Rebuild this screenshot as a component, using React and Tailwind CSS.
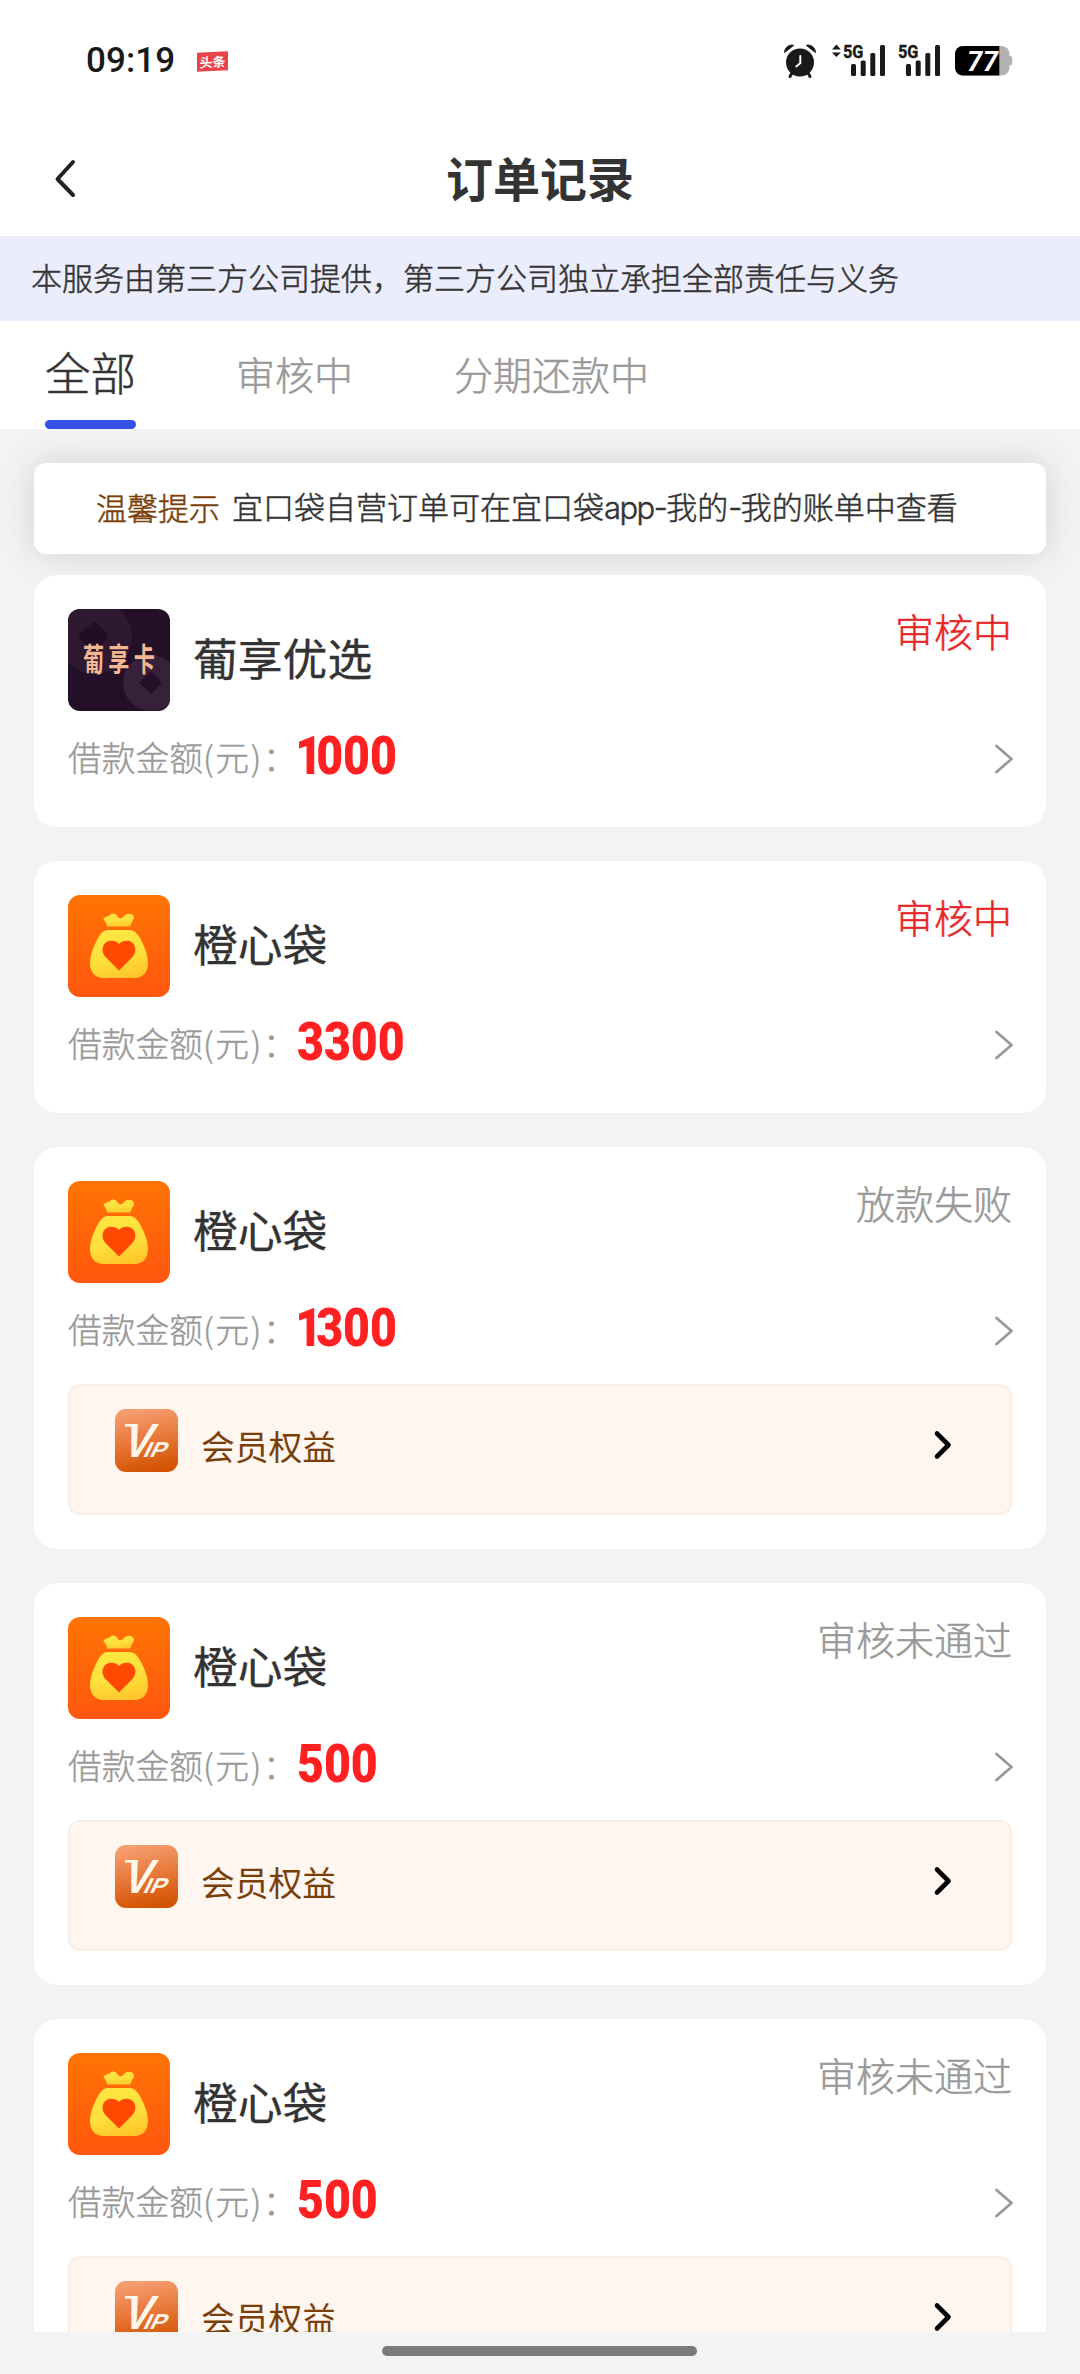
import React from "react";

const orders = [
  { logo: "card", name: "葡享优选", amount: "1000", status: "审核中", active: true, member: false },
  { logo: "bag", name: "橙心袋", amount: "3300", status: "审核中", active: true, member: false },
  { logo: "bag", name: "橙心袋", amount: "1300", status: "放款失败", active: false, member: true },
  { logo: "bag", name: "橙心袋", amount: "500", status: "审核未通过", active: false, member: true },
  { logo: "bag", name: "橙心袋", amount: "500", status: "审核未通过", active: false, member: true },
];

function AlarmIcon() {
  return (
    <svg className="h-[34px] w-8" viewBox="0 0 32 34" fill="none">
      <circle cx="16" cy="18.500" r="14" fill="#191919" />
      <path d="M0.600 8.500C0.600 4 5 0 9.600 1.400Z" fill="#191919" stroke="#191919" strokeLinejoin="round" />
      <path d="M31.400 8.500C31.400 4 27 0 22.400 1.400Z" fill="#191919" stroke="#191919" strokeLinejoin="round" />
      <path d="M8 29l-2 3.500M24 29l2 3.500" stroke="#191919" strokeWidth="3" strokeLinecap="round" />
      <path d="M16.300 12v7l-4 3.400" stroke="#fff" strokeWidth="2" strokeLinecap="round" />
    </svg>
  );
}

function Signal({ data }) {
  return (
    <svg className="h-[34px] w-[54px] overflow-visible" viewBox="0 0 54 34" fill="#191919">
      {data && (
        <>
          <path d="M0 5.600L4.400 0.500L8.800 5.600Z" />
          <path d="M0 8.400L4.400 13L8.800 8.400Z" />
        </>
      )}
      <text x="11" y="14" stroke="#191919" strokeWidth="0.400" fontFamily="Roboto, sans-serif" fontWeight="700" fontSize="18.500" textLength="20.500" lengthAdjust="spacingAndGlyphs">5G</text>
      <rect x="19" y="20" width="5" height="12" rx="1.500" />
      <rect x="28.700" y="16.500" width="5" height="15.500" rx="1.500" />
      <rect x="38.300" y="9" width="5" height="23" rx="1.500" />
      <rect x="48" y="1" width="5" height="31" rx="1.500" />
    </svg>
  );
}

function Battery() {
  return (
    <svg className="h-[34px] w-[58px]" viewBox="0 0 58 34">
      <defs>
        <clipPath id="battery-body">
          <rect x="0" y="2" width="54.500" height="29.500" rx="8" />
        </clipPath>
      </defs>
      <rect x="53" y="12" width="4.200" height="9.500" rx="2" fill="#b2b2b2" />
      <g clipPath="url(#battery-body)">
        <rect width="58" height="34" fill="#b2b2b2" />
        <rect width="44.300" height="34" fill="#000" />
      </g>
      <text x="12" y="26.500" fill="#fff" fontFamily="Roboto, sans-serif" fontWeight="700" fontStyle="italic" fontSize="27.500" textLength="31">77</text>
    </svg>
  );
}

function StatusBar() {
  return (
    <div className="flex h-[120px] items-center pl-[86px] pr-[67px]">
      <span className="mt-[3px] w-[90px] whitespace-nowrap font-[Roboto] text-[35px] font-medium tracking-[0.100px] text-[#191919]">09:19</span>
      <span className="ml-[21px] mt-[2px] flex h-[19px] w-[31px] -skew-y-3 items-center justify-center bg-[#e8434a] text-[13px] font-bold leading-none text-white">
        头条
      </span>
      <div className="ml-auto flex items-center pt-px">
        <AlarmIcon />
        <div className="ml-4"><Signal data /></div>
        <div className="ml-px"><Signal /></div>
        <div className="ml-[14px]"><Battery /></div>
      </div>
    </div>
  );
}

function CardLogo() {
  return (
    <svg className="h-[102px] w-[102px] rounded-xl" viewBox="0 0 102 102">
      <rect width="102" height="102" fill="#230f28" />
      <circle cx="27" cy="28" r="37" fill="#2e1931" />
      <path d="M27 12L37 22Q42 27 37 32L27 43L13 31Q9 28 13 24Z" fill="#220d27" />
      <circle cx="83" cy="74" r="28" fill="#36203a" />
      <path d="M83 62L94 74L83 85L71 74Z" fill="#240f29" />
      <g fill="#f3b892" fontFamily="Noto Sans CJK SC, sans-serif" fontWeight="700" transform="translate(15 62) scale(0.780 1.180)">
        <text x="0" y="0" fontSize="27" letterSpacing="5.500">葡享卡</text>
      </g>
    </svg>
  );
}

function BagLogo() {
  return (
    <svg className="h-[102px] w-[102px] rounded-xl" viewBox="0 0 102 102">
      <defs>
        <linearGradient id="bag-bg" x1="0" y1="0" x2="0" y2="1">
          <stop offset="0" stopColor="#ff7404" />
          <stop offset="1" stopColor="#ff570e" />
        </linearGradient>
        <linearGradient id="bag-fill" x1="0.300" y1="0" x2="0.600" y2="1">
          <stop offset="0" stopColor="#ffe640" />
          <stop offset="0.550" stopColor="#fde03c" />
          <stop offset="1" stopColor="#ffc62c" />
        </linearGradient>
      </defs>
      <rect width="102" height="102" fill="url(#bag-bg)" />
      <path d="M39 31.500C38.500 27 36.500 26 35.400 24.300C36.500 21.500 39.500 21.500 42 20C44.500 17.800 47.500 18.200 49.500 21.300C51.500 24.200 54 23.600 55.500 21.800C57.500 19 61 17.600 64 19.600C67.600 22.300 65.500 25.300 64 27L62.300 31.500Z" fill="url(#bag-fill)" />
      <path d="M39.500 35H62C66 35 70 38.500 74 47C77.500 54 80 61 80 68C80 77 75 83 66 83H36C27 83 22 77 22 68C22 61 24.500 54 28 47C32 38.500 35.500 35 39.500 35Z" fill="url(#bag-fill)" />
      <path d="M51 75.500L38.500 63C30.500 55 36 45.700 43 45.700C46.500 45.700 49 46.800 51 49C53 46.800 55.500 45.700 59 45.700C66 45.700 71.500 55 63.500 63Z" fill="#ff4800" />
    </svg>
  );
}

function VipIcon() {
  return (
    <svg className="h-[63px] w-[63px] rounded-[11px]" viewBox="0 0 63 63">
      <defs>
        <linearGradient id="vip-bg" x1="0.350" y1="0" x2="0.550" y2="1">
          <stop offset="0" stopColor="#f59f72" />
          <stop offset="0.550" stopColor="#e67434" />
          <stop offset="1" stopColor="#d25200" />
        </linearGradient>
      </defs>
      <rect width="63" height="63" fill="url(#vip-bg)" />
      <g fill="#fff6ec" fontFamily="Liberation Sans, sans-serif" fontWeight="700">
        <rect x="10" y="15" width="9" height="2.600" />
        <g transform="translate(5.500 48) skewX(-18)">
          <text fontSize="48" textLength="28" lengthAdjust="spacingAndGlyphs">V</text>
        </g>
        <g transform="translate(27 48) skewX(-26)">
          <text fontSize="21.500" textLength="22" lengthAdjust="spacingAndGlyphs">IP</text>
        </g>
      </g>
    </svg>
  );
}

function Amount({ value }) {
  const narrow = value.startsWith("1");
  return (
    <span className="-mt-[7px] origin-left scale-x-[0.860] font-[Roboto] text-[54px] font-black leading-[60px] text-[#ff2122]">
      {narrow && <span className="ml-[-2px] tracking-[-0.130em]">1</span>}
      {narrow ? value.slice(1) : value}
    </span>
  );
}

function OrderCard({ order }) {
  return (
    <article className="shrink-0 rounded-[23px] bg-white p-[34px]">
      <div className="flex h-[102px] items-center">
        {order.logo === "card" ? <CardLogo /> : <BagLogo />}
        <h2 className="ml-[23px] -mt-[7px] text-[44.800px] font-normal leading-[60px] text-[#333] [-webkit-text-stroke:0.300px_#333]">{order.name}</h2>
        <span className={order.active ? "-mt-[3px] ml-auto self-start text-[39px] font-light leading-[48px] text-[#e82528] [-webkit-text-stroke:0.500px_currentColor]" : "-mt-[3px] ml-auto self-start text-[39px] font-light leading-[48px] text-[#999] [-webkit-text-stroke:0.500px_currentColor]"}>
          {order.status}
        </span>
      </div>
      <div className="mt-[14px] flex h-[68px] items-center">
        <span className="-mt-[5px] w-[229px] whitespace-nowrap text-[33.750px] font-light leading-[50px] text-[#999] [-webkit-text-stroke:0.400px_currentColor]">
          借款金额<span className="tracking-[0.050em]">(元)</span>：
        </span>
        <Amount value={order.amount} />
        <svg className="-mr-px ml-auto h-[30px] w-5" viewBox="0 0 20 30" fill="none">
          <path d="M3.500 2L18.500 15L3.500 28" stroke="#999" strokeWidth="2.800" strokeLinecap="round" strokeLinejoin="round" />
        </svg>
      </div>
      {order.member && (
        <div className="mt-[19px] flex h-[131px] items-start rounded-xl border-2 border-[#faeee4] bg-[#fff6f0] pl-[45px] pr-[57px] pt-[23px]">
          <VipIcon />
          <span className="ml-[23px] mt-[12px] text-[33.750px] font-normal leading-[50px] text-[#7a3e08]">会员权益</span>
          <svg className="ml-auto mt-[20px] h-[32px] w-5" viewBox="0 0 20 32" fill="none">
            <path d="M4 4.500L15.500 16L4 27.500" stroke="#000" strokeWidth="4.600" strokeLinecap="round" strokeLinejoin="round" />
          </svg>
        </div>
      )}
    </article>
  );
}

export default function App() {
  return (
    <div className="flex h-[2374px] w-[1080px] flex-col overflow-hidden bg-[#f3f3f3] font-['Noto_Sans_CJK_SC',sans-serif]">
      <header className="h-[236px] bg-white">
        <StatusBar />
        <div className="grid h-[116px] grid-cols-[1fr_auto_1fr] items-center">
          <svg className="ml-[52px] h-[42px] w-7" viewBox="0 0 28 42" fill="none">
            <path d="M21 5L5.500 22L21 38" stroke="#222" strokeWidth="4" strokeLinecap="round" strokeLinejoin="round" />
          </svg>
          <h1 className="-mt-[3px] text-[47px] font-bold leading-[60px] text-[#333]">订单记录</h1>
        </div>
      </header>
      <div className="flex h-[85px] items-center bg-[#ebedfd] pb-[4px] pl-[31px] text-[31px] font-light leading-[44px] text-[#333] [-webkit-text-stroke:0.500px_currentColor]">
        本服务由第三方公司提供，第三方公司独立承担全部责任与义务
      </div>
      <nav className="flex h-[108px] items-stretch bg-white pl-[45px] text-[39px] font-light text-[#999] [-webkit-text-stroke:0.500px_currentColor]">
        <div className="flex flex-col items-center justify-between text-[45.500px] text-[#333]">
          <span className="mt-[18px] leading-[64px]">全部</span>
          <span className="h-[9px] w-full rounded-full bg-[#3550e8]" />
        </div>
        <span className="ml-[100px] leading-[104px]">审核中</span>
        <span className="ml-[101px] leading-[104px]">分期还款中</span>
      </nav>
      <main className="flex h-[1903px] flex-col overflow-hidden px-[34px] pt-[34px]">
        <div className="flex h-[91px] shrink-0 items-center rounded-xl bg-white pb-[4px] pl-[62px] text-[31px] font-light leading-[44px] text-[#333] shadow-[0_0_34px_rgba(0,0,0,0.14)] [-webkit-text-stroke:0.500px_currentColor]">
          <span className="text-[#7a3e08]">温馨提示</span>
          <span className="ml-3">宜口袋自营订单可在宜口袋<span className="font-[Inter] tracking-[-0.050em]">app-</span>我的<span className="font-[Inter] tracking-[-0.050em]">-</span>我的账单中查看</span>
        </div>
        <section className="relative mt-[21px] flex flex-col gap-[34px]">
          {orders.map((order, i) => (
            <OrderCard key={i} order={order} />
          ))}
        </section>
      </main>
      <footer className="flex h-[42px] justify-center pt-[14px]">
        <span className="-ml-px h-[10px] w-[315px] rounded-full bg-[#7b7b7b]" />
      </footer>
    </div>
  );
}
